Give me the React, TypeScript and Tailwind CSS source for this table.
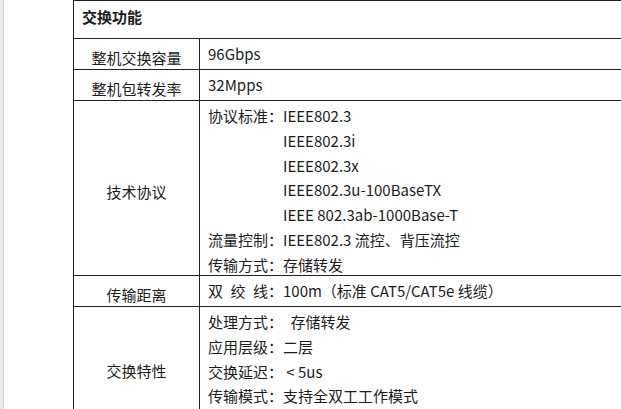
const font = { fontFamily: '"Noto Sans CJK SC", "Noto Sans", sans-serif' }

type Row = { label: string; lines: string[]; h: string }

const rows: Row[] = [
  { label: '整机交换容量', lines: ['96Gbps'], h: 'h-[31px]' },
  { label: '整机包转发率', lines: ['32Mpps'], h: 'h-[31px]' },
  {
    label: '技术协议',
    lines: [
      '协议标准：IEEE802.3',
      '\u3000\u3000\u3000\u3000\u3000IEEE802.3i',
      '\u3000\u3000\u3000\u3000\u3000IEEE802.3x',
      '\u3000\u3000\u3000\u3000\u3000IEEE802.3u-100BaseTX',
      '\u3000\u3000\u3000\u3000\u3000IEEE 802.3ab-1000Base-T',
      '流量控制：IEEE802.3 流控、背压流控',
      '传输方式：存储转发',
    ],
    h: 'h-[175px]',
  },
  { label: '传输距离', lines: ['双\u2002绞\u2002线：100m（标准 CAT5/CAT5e 线缆）'], h: 'h-[31px]' },
  {
    label: '交换特性',
    lines: ['处理方式：\u2002存储转发', '应用层级：二层', '交换延迟： < 5us', '传输模式：支持全双工工作模式'],
    h: 'h-[120px]',
  },
]

export default function App() {
  return (
    <div className="flex h-[409px] w-[621px] overflow-hidden bg-white text-[15px] text-[#1c1c1c]" style={font}>
      {/* left gutter */}
      <div className="w-[4px] shrink-0 border-r border-[#d4d4d4] bg-[#ececec]" />

      <div className="ml-[69px] w-[600px] shrink-0">
        <div className="border-l border-t border-[#222]">
          <div className="flex h-[38px] items-start border-b border-[#222] pl-[8px] pt-[3px] font-bold leading-[25px]">
            交换功能
          </div>

          {rows.map((row) => (
            <div key={row.label} className={`flex border-b border-[#222] ${row.h}`}>
              <div className="flex w-[126px] shrink-0 items-center justify-center border-r border-[#222] pt-[9px]">
                {row.label}
              </div>
              <div className="flex flex-col whitespace-pre pl-[8px] pt-[3px] leading-[24.8px]">
                {row.lines.map((line, i) => (
                  <span key={i}>{line}</span>
                ))}
              </div>
            </div>
          ))}
        </div>
      </div>
    </div>
  )
}
